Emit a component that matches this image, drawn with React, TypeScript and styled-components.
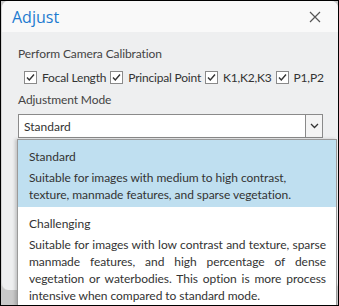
import React from "react";
import styled, { createGlobalStyle } from "styled-components";

const Global = createGlobalStyle`
  html, body { margin: 0; padding: 0; }
  body { width: 339px; height: 306px; overflow: hidden; font-family: Lato, "Open Sans", sans-serif; }
  * { box-sizing: border-box; }
`;

const Frame = styled.div`
  position: relative;
  width: 339px;
  height: 306px;
  border: 1px solid #000;
  background: #c9c9c9;
  overflow: hidden;
`;

const Dialog = styled.div`
  height: 289px;
  background: #eeeff0;
  border-radius: 7px;
  border-left: 1px solid #d4d4d4;
  overflow: hidden;
  display: flex;
  flex-direction: column;
`;

const TitleBar = styled.div`
  height: 31px;
  background: #f9f9f9;
  display: flex;
  align-items: center;
  justify-content: space-between;
  padding: 0 17px 0 10px;
`;

const Title = styled.div`
  color: #1d7bd0;
  font-size: 16px;
  font-family: "Open Sans", sans-serif;
  margin-top: 1px;
`;

const Body = styled.div`
  padding: 14px 15px 0 16px;
  display: flex;
  flex-direction: column;
`;

const Label = styled.div`
  color: #444;
  font-size: 12px;
  letter-spacing: -0.1px;
  line-height: 16px;
`;

const CheckRow = styled.div`
  display: flex;
  align-items: center;
  margin: 7px 0 0 6px;
  height: 16px;
`;

const Check = styled.span`
  width: 13px;
  height: 13px;
  background: #fff;
  border: 1px solid #8a8a8a;
  display: inline-flex;
  align-items: center;
  justify-content: center;
  margin-right: 5px;
`;

const CheckText = styled.span`
  color: #333;
  font-size: 12px;
  letter-spacing: -0.2px;
  white-space: nowrap;
  margin-right: 4px;
`;

const ModeLabel = styled(Label)`
  margin-top: 7px;
`;

const Select = styled.div`
  margin-top: 6px;
  height: 24px;
  background: #fff;
  border: 1px solid #8a8a8a;
  display: flex;
  align-items: stretch;
  justify-content: space-between;
  padding-left: 5px;
`;

const SelectValue = styled.span`
  font-size: 12px;
  color: #333;
  align-self: center;
`;

const ArrowBox = styled.span`
  width: 17px;
  border-left: 1px solid #8a8a8a;
  background: #f4f4f4;
  display: flex;
  align-items: center;
  justify-content: center;
`;

const Popup = styled.div`
  position: absolute;
  left: 16px;
  top: 138px;
  right: 1px;
  bottom: -1px;
  background: #fff;
  border: 1px solid #9a9a9a;
  box-shadow: -2px 0 3px rgba(0, 0, 0, 0.18);
  display: flex;
  flex-direction: column;
`;

const Option = styled.div<{ $selected?: boolean }>`
  background: ${(p) => (p.$selected ? "#bfdff0" : "#fff")};
  padding: 8px 10px 4px 11px;
`;

const OptionTitle = styled.div`
  font-size: 12px;
  color: #333;
  line-height: 18px;
  margin-bottom: 3px;
`;

const OptionDesc = styled.div<{ $justify?: boolean }>`
  font-size: 12px;
  letter-spacing: -0.05px;
  color: #333;
  line-height: 17px;
  text-align: ${(p) => (p.$justify ? "justify" : "left")};
`;

const CheckMark = () => (
  <svg width="11" height="11" viewBox="0 0 11 11">
    <path d="M2 5.5 L4.3 8 L9 2.5" fill="none" stroke="#333" strokeWidth="1.4" />
  </svg>
);

const Box = ({ label }: { label: string }) => (
  <>
    <Check>
      <CheckMark />
    </Check>
    <CheckText>{label}</CheckText>
  </>
);

export default function App() {
  return (
    <>
      <Global />
      <Frame>
        <Dialog>
          <TitleBar>
            <Title>Adjust</Title>
            <svg width="12" height="12" viewBox="0 0 12 12">
              <path d="M1 1 L11 11 M11 1 L1 11" stroke="#555" strokeWidth="1.2" />
            </svg>
          </TitleBar>
          <Body>
            <Label>Perform Camera Calibration</Label>
            <CheckRow>
              <Box label="Focal Length" />
              <Box label="Principal Point" />
              <Box label="K1,K2,K3" />
              <Box label="P1,P2" />
            </CheckRow>
            <ModeLabel>Adjustment Mode</ModeLabel>
            <Select>
              <SelectValue>Standard</SelectValue>
              <ArrowBox>
                <svg width="9" height="6" viewBox="0 0 9 6">
                  <path d="M1 1 L4.5 4.5 L8 1" fill="none" stroke="#333" strokeWidth="1.3" />
                </svg>
              </ArrowBox>
            </Select>
          </Body>
        </Dialog>
        <Popup>
          <Option $selected>
            <OptionTitle>Standard</OptionTitle>
            <OptionDesc>
              Suitable for images with medium to high contrast, texture, manmade features, and sparse vegetation.
            </OptionDesc>
          </Option>
          <Option>
            <OptionTitle>Challenging</OptionTitle>
            <OptionDesc $justify>
              Suitable for images with low contrast and texture, sparse manmade features, and high percentage of dense vegetation or waterbodies. This option is more process intensive when compared to standard mode.
            </OptionDesc>
          </Option>
        </Popup>
      </Frame>
    </>
  );
}
